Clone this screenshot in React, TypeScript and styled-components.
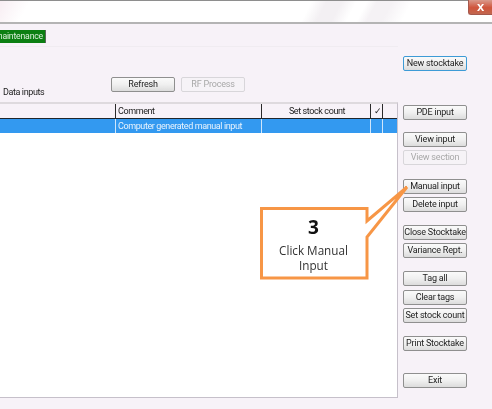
import React from 'react';
import styled, {createGlobalStyle} from 'styled-components';

const GlobalStyle = createGlobalStyle`
    html, body {
        margin: 0;
        padding: 0;
        background: #f7f2f8;
    }
`;

const Page = styled.div`
    position: relative;
    width: 492px;
    height: 409px;
    overflow: hidden;
    display: flex;
    flex-direction: column;
    background: #f7f2f8;
    font-family: Roboto, "Liberation Sans", sans-serif;
    font-size: 9px;
    letter-spacing: -0.2px;
    color: #222;
    filter: blur(0.3px);
`;

const TitleBar = styled.div`
    height: 21px;
    flex: none;
    border-top: 1px solid #8e8e8e;
    border-bottom: 2px solid #b4b4b4;
    background:
        linear-gradient(118deg, transparent 62%, #f3f0f3 65%, #f3f0f3 68%, transparent 71%, transparent 73%, #f5f2f5 75%, #f5f2f5 78%, transparent 82%),
        linear-gradient(118deg, #f8eef3 0, #fff 6%, #fff 100%);
`;

const CloseButton = styled.div`
    position: absolute;
    top: 0;
    right: 0;
    width: 24px;
    height: 15px;
    border: 1px solid #a5584c;
    border-top: 0;
    border-right: 0;
    border-radius: 0 0 0 3px;
    box-sizing: border-box;
    background: linear-gradient(#d99a8c, #d0553c 55%, #c2674f);
    color: #fff;
    font-family: "Liberation Sans", sans-serif;
    font-size: 13px;
    font-weight: 700;
    line-height: 13px;
    text-align: center;
`;

const Body = styled.div`
    flex: 1;
    display: flex;
    min-height: 0;
`;

const Main = styled.div`
    width: 398px;
    flex: none;
    display: flex;
    flex-direction: column;
`;

const TabStrip = styled.div`
    height: 14px;
    margin-top: 6px;
    padding-bottom: 2px;
    border-bottom: 1px solid #f0ecf1;
    flex: none;
`;

const Tab = styled.div`
    width: 46px;
    height: 13px;
    overflow: hidden;
    box-sizing: border-box;
    background: #0c7f12;
    border-right: 1px solid #5a6a5a;
    color: #dcefdc;
    font-size: 8.7px;
    line-height: 13px;
    direction: rtl;
    padding-right: 2px;
    white-space: nowrap;
`;

const Toolbar = styled.div`
    height: 55px;
    flex: none;
    display: flex;
    align-items: flex-end;
    padding-left: 3px;
    box-sizing: border-box;
`;

const Label = styled.span`
    width: 108px;
    height: 11px;
    line-height: 11px;
    margin-bottom: 4px;
    letter-spacing: -0.4px;
`;

const ToolbarButtons = styled.div`
    display: flex;
    gap: 6px;
    margin-bottom: 10px;
`;

const Table = styled.div`
    height: 296px;
    flex: none;
    background: #fff;
    border: 1px solid #c6c0ca;
    border-left: 0;
    border-top: 2px solid #dedade;
    box-sizing: border-box;
    letter-spacing: -0.4px;
`;

const Row = styled.div<{$selected?: boolean}>`
    display: grid;
    grid-template-columns: 115px 146px 109px 12px 13px;
    height: 14px;
    background: ${(p) => (p.$selected ? '#3399f0' : '#f7f2f8')};
    border-bottom: ${(p) => (p.$selected ? 'none' : '1px solid #20252b')};
    color: ${(p) => (p.$selected ? '#e8f3fd' : '#222')};
`;

const Cell = styled.div<{$center?: boolean; $selected?: boolean}>`
    border-left: 1px solid ${(p) => (p.$selected ? '#cfe6fb' : '#2a2a2a')};
    padding-left: 2px;
    line-height: 14px;
    white-space: nowrap;
    overflow: hidden;
    text-align: ${(p) => (p.$center ? 'center' : 'left')};
    &:first-child {
        border-left: 0;
    }
`;

const Side = styled.div`
    display: flex;
    flex-direction: column;
    align-items: flex-start;
    padding: 32px 0 0 5px;
`;

const Button = styled.div<{$disabled?: boolean; $focused?: boolean; $gap?: number}>`
    width: 64px;
    height: 15px;
    flex: none;
    box-sizing: border-box;
    margin-top: ${(p) => p.$gap ?? 0}px;
    border: 1px solid ${(p) => (p.$focused ? '#3d9bd6' : p.$disabled ? '#d8d6da' : '#8f8f8f')};
    border-radius: 2px;
    background: ${(p) => (p.$disabled ? '#f6f3f7' : 'linear-gradient(#fafafa, #f0f0f0 50%, #dcdcdc)')};
    color: ${(p) => (p.$disabled ? '#a8a8a8' : '#222')};
    line-height: 13px;
    text-align: center;
    white-space: nowrap;
`;

const Callout = styled.div`
    position: absolute;
    left: 260px;
    top: 186px;
    width: 150px;
    height: 95px;
`;

const CalloutShape = styled.svg`
    position: absolute;
    inset: 0;
`;

const CalloutText = styled.div`
    position: absolute;
    left: 0;
    top: 21px;
    width: 107px;
    height: 72px;
    display: flex;
    flex-direction: column;
    align-items: center;
    padding-top: 7px;
    box-sizing: border-box;
    font-family: "Open Sans", sans-serif;
    font-size: 11.7px;
    letter-spacing: 0;
    line-height: 15px;
    text-align: center;
    color: #333;
`;

const CalloutNumber = styled.div`
    font-size: 19px;
    font-weight: 700;
    line-height: 26px;
    margin-bottom: 3px;
    color: #111;
`;

const sideButtons = [
    {text: 'New stocktake', focused: true},
    {text: 'PDE input', gap: 34},
    {text: 'View input', gap: 12},
    {text: 'View section', disabled: true, gap: 3},
    {text: 'Manual input', gap: 14},
    {text: 'Delete input', gap: 3},
    {text: 'Close Stocktake', gap: 13},
    {text: 'Variance Rept.', gap: 3},
    {text: 'Tag all', gap: 13},
    {text: 'Clear tags', gap: 4},
    {text: 'Set stock count', gap: 3},
    {text: 'Print Stocktake', gap: 13},
    {text: 'Exit', gap: 22},
];

export default function App() {
    return (
        <Page>
            <GlobalStyle/>
            <TitleBar/>
            <CloseButton>{'x'}</CloseButton>
            <Body>
                <Main>
                    <TabStrip>
                        <Tab>{'maintenance'}</Tab>
                    </TabStrip>
                    <Toolbar>
                        <Label>{'Data inputs'}</Label>
                        <ToolbarButtons>
                            <Button>{'Refresh'}</Button>
                            <Button $disabled={true}>{'RF Process'}</Button>
                        </ToolbarButtons>
                    </Toolbar>
                    <Table>
                        <Row>
                            <Cell/>
                            <Cell>{'Comment'}</Cell>
                            <Cell $center={true}>{'Set stock count'}</Cell>
                            <Cell $center={true}>{'✓'}</Cell>
                            <Cell/>
                        </Row>
                        <Row $selected={true}>
                            <Cell $selected={true}/>
                            <Cell $selected={true}>{'Computer generated manual input'}</Cell>
                            <Cell $selected={true}/>
                            <Cell $selected={true}/>
                            <Cell $selected={true}/>
                        </Row>
                    </Table>
                </Main>
                <Side>
                    {sideButtons.map((b) => (
                        <Button
                            key={b.text}
                            $disabled={b.disabled}
                            $focused={b.focused}
                            $gap={b.gap}
                        >
                            {b.text}
                        </Button>
                    ))}
                </Side>
            </Body>
            <Callout>
                <CalloutShape
                    width='150'
                    height='95'
                    viewBox='0 0 150 95'
                >
                    <path
                        d='M1.5 22.5 H107 V35 L147 1 L107 51 V92 H1.5 Z'
                        fill='#fff'
                        stroke='#f79646'
                        strokeWidth='3'
                    />
                </CalloutShape>
                <CalloutText>
                    <CalloutNumber>{'3'}</CalloutNumber>
                    {'Click Manual'}
                    <br/>
                    {'Input'}
                </CalloutText>
            </Callout>
        </Page>
    );
}
